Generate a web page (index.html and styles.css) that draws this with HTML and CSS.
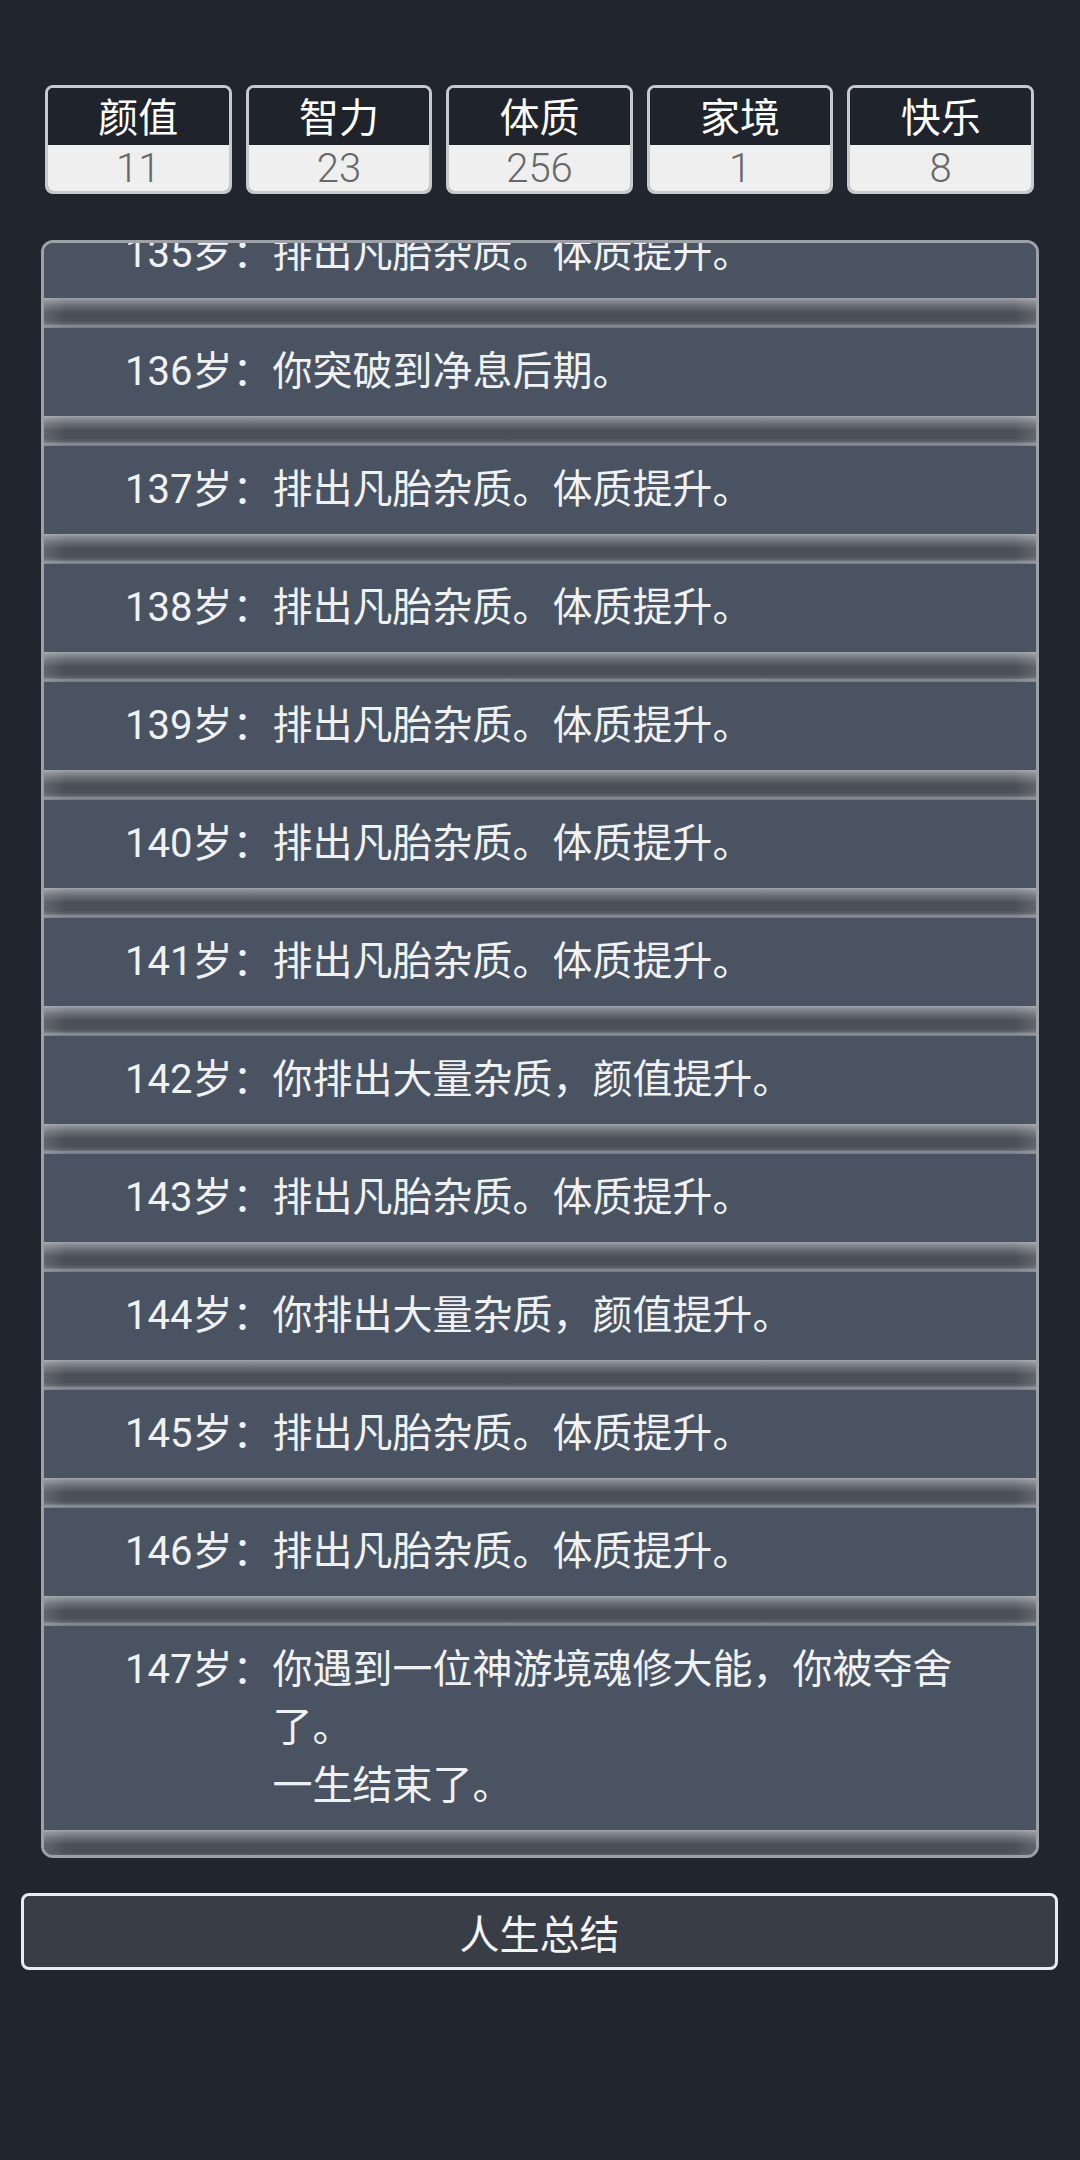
FILE: index.html
```html
<!DOCTYPE html>
<html>
<head>
  <meta charset="utf-8">
  <title>人生重开</title>
  <meta name="viewport" content="width=device-width, initial-scale=1">
  <link rel="stylesheet" href="styles.css">
</head>
<body>
  <div class="app">
    <div class="stats">
      <div class="stat">
        <div class="stat-name">颜值</div>
        <div class="stat-value">11</div>
      </div>
      <div class="stat">
        <div class="stat-name">智力</div>
        <div class="stat-value">23</div>
      </div>
      <div class="stat">
        <div class="stat-name">体质</div>
        <div class="stat-value">256</div>
      </div>
      <div class="stat">
        <div class="stat-name">家境</div>
        <div class="stat-value">1</div>
      </div>
      <div class="stat">
        <div class="stat-name">快乐</div>
        <div class="stat-value">8</div>
      </div>
    </div>

    <div class="log">
      <ul class="log-list">
        <li class="log-item"><span class="age">135岁：</span><span class="event">排出凡胎杂质。体质提升。</span></li>
        <li class="log-item"><span class="age">136岁：</span><span class="event">你突破到净息后期。</span></li>
        <li class="log-item"><span class="age">137岁：</span><span class="event">排出凡胎杂质。体质提升。</span></li>
        <li class="log-item"><span class="age">138岁：</span><span class="event">排出凡胎杂质。体质提升。</span></li>
        <li class="log-item"><span class="age">139岁：</span><span class="event">排出凡胎杂质。体质提升。</span></li>
        <li class="log-item"><span class="age">140岁：</span><span class="event">排出凡胎杂质。体质提升。</span></li>
        <li class="log-item"><span class="age">141岁：</span><span class="event">排出凡胎杂质。体质提升。</span></li>
        <li class="log-item"><span class="age">142岁：</span><span class="event">你排出大量杂质，颜值提升。</span></li>
        <li class="log-item"><span class="age">143岁：</span><span class="event">排出凡胎杂质。体质提升。</span></li>
        <li class="log-item"><span class="age">144岁：</span><span class="event">你排出大量杂质，颜值提升。</span></li>
        <li class="log-item"><span class="age">145岁：</span><span class="event">排出凡胎杂质。体质提升。</span></li>
        <li class="log-item"><span class="age">146岁：</span><span class="event">排出凡胎杂质。体质提升。</span></li>
        <li class="log-item"><span class="age">147岁：</span><span class="event">你遇到一位神游境魂修大能，你被夺舍了。<br>一生结束了。</span></li>
      </ul>
    </div>

    <button class="summary-btn">人生总结</button>
  </div>
</body>
</html>
```

FILE: styles.css
```css
* {
  box-sizing: border-box;
}

body {
  margin: 0;
  background-color: #21252d;
  font-family: Roboto, "Noto Sans CJK SC", sans-serif;
  color: #f0f1f3;
}

.app {
  width: 1080px;
  min-height: 2160px;
  padding-top: 85px;
}

/* stats */

.stats {
  display: flex;
  gap: 14px;
  margin: 0 46px 0 45px;
}

.stat {
  flex: 1;
  height: 109px;
  border: 3px solid #c7c9cc;
  border-radius: 8px;
  overflow: hidden;
  text-align: center;
  font-size: 40px;
}

.stat-name {
  height: 57px;
  line-height: 62px;
  background-color: #1f232b;
  color: #fff;
}

.stat-value {
  height: 46px;
  line-height: 48px;
  background-color: #efefef;
  color: #686868;
  font-weight: 300;
}

/* log */

.log {
  height: 1618px;
  margin: 46px 41px 0;
  border: 3px solid #9da1a7;
  border-radius: 12px;
  overflow: hidden;
  background-color: #4a5362;
}

.log-list {
  list-style: none;
  margin: -33px 0 0;
  padding: 0;
}

.log-item {
  display: flex;
  padding: 15px 60px 45px 81px;
  font-size: 40px;
  line-height: 58px;
  background:
    linear-gradient(to right, rgba(255,255,255,0.12), rgba(255,255,255,0) 22px, rgba(255,255,255,0) calc(100% - 22px), rgba(255,255,255,0.12)) left bottom / 100% 30px no-repeat,
    linear-gradient(to bottom, #a0a3a9 0, #8a8e94 8%, #6a6e75 25%, #4a4e56 50%, #4c5159 75%, #5d6168 86%, #8c9096 93%, #737780 100%) left bottom / 100% 30px no-repeat,
    #4a5362;
}

.age {
  flex: none;
  white-space: nowrap;
}

.event {
  flex: 1;
}

/* button */

.summary-btn {
  display: block;
  width: calc(100% - 43px);
  height: 77px;
  margin: 35px 22px 0 21px;
  border: 3px solid #e8ebef;
  border-radius: 8px;
  background-color: #393d46;
  color: #f2f3f5;
  font-family: Roboto, "Noto Sans CJK SC", sans-serif;
  font-size: 40px;
  padding: 0;
}
```
